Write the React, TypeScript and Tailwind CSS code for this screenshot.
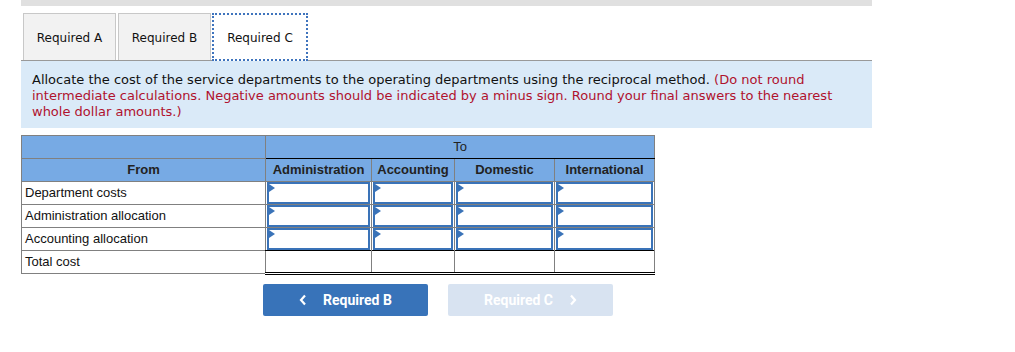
import React from "react";

const Flag = () => (
  <svg className="absolute left-0 top-0" width="6" height="8" viewBox="0 0 6 8">
    <polygon points="0,0 6,4 0,8" fill="#3a73b8" />
  </svg>
);

const InputCell = () => (
  <td className="border border-[#808080] p-0 h-[23px]">
    <div className="relative h-[22px] mx-[1px] border-2 border-[#3a73b8] bg-white">
      <Flag />
    </div>
  </td>
);

export default function App() {
  const rows = ["Department costs", "Administration allocation", "Accounting allocation"];
  return (
    <div className="w-[1015px] h-[352px] bg-white relative" style={{ fontFamily: "'DejaVu Sans', Verdana, sans-serif" }}>
      <div className="ml-[21px] w-[851px] h-[6px] bg-[#e0e0e0]" />
      <div className="ml-[21px] w-[851px] mt-[7px]">
        <div className="flex items-end h-[48px] pl-[2px] gap-[2px] border-b border-[#999999]">
          <div className="w-[93px] h-[47px] pt-[1px] bg-[#f2f2f2] border border-b-0 border-[#c8c8c8] flex items-center justify-center text-[12px] text-[#111]">
            Required A
          </div>
          <div className="w-[93px] h-[47px] pt-[1px] bg-[#f2f2f2] border border-b-0 border-[#c8c8c8] flex items-center justify-center text-[12px] text-[#111]">
            Required B
          </div>
          <div className="-ml-[1px] w-[96px] h-[48px] pt-[1px] -mb-[1px] bg-white border-2 border-dotted border-[#3f74bd] flex items-center justify-center text-[12px] text-[#111]">
            Required C
          </div>
        </div>
        <div className="bg-[#daeaf8] h-[67px] pl-[11px] pr-[30px] pt-[11px] text-[13px] leading-[16px] text-[#111]">
          Allocate the cost of the service departments to the operating departments using the reciprocal method.{" "}
          <span className="text-[#b0122e]">
            (Do not round intermediate calculations. Negative amounts should be indicated by a minus sign. Round your final answers to the nearest whole dollar amounts.)
          </span>
        </div>
      </div>

      <div className="ml-[21px] mt-[7px]" style={{ fontFamily: "'Liberation Sans', Arial, sans-serif" }}>
        <table className="border-collapse table-fixed w-[633px] text-[13px] text-[#111]">
          <colgroup>
            <col className="w-[244px]" />
            <col className="w-[106px]" />
            <col className="w-[83px]" />
            <col className="w-[100px]" />
            <col className="w-[100px]" />
          </colgroup>
          <thead>
            <tr className="h-[23px] bg-[#77aae4]">
              <th className="border border-[#808080] font-normal"></th>
              <th colSpan={4} className="border border-[#808080] border-b-black font-normal text-[#222] text-center">To</th>
            </tr>
            <tr className="h-[23px] bg-[#77aae4]">
              <th className="border border-[#808080] font-bold text-[#222] text-center">From</th>
              <th className="border border-[#808080] border-t-black font-bold text-[#222] text-center whitespace-nowrap">Administration</th>
              <th className="border border-[#808080] border-t-black font-bold text-[#222] text-center">Accounting</th>
              <th className="border border-[#808080] border-t-black font-bold text-[#222] text-center">Domestic</th>
              <th className="border border-[#808080] border-t-black font-bold text-[#222] text-center">International</th>
            </tr>
          </thead>
          <tbody>
            {rows.map((r) => (
              <tr key={r} className="h-[23px]">
                <td className="border border-[#808080] pl-[3px] py-0">{r}</td>
                <InputCell />
                <InputCell />
                <InputCell />
                <InputCell />
              </tr>
            ))}
            <tr className="h-[23px]">
              <td className="border border-[#808080] pl-[3px] py-0">Total cost</td>
              <td className="border border-[#808080] border-t-black border-b-[3px] border-b-black border-double"></td>
              <td className="border border-[#808080] border-t-black border-b-[3px] border-b-black border-double"></td>
              <td className="border border-[#808080] border-t-black border-b-[3px] border-b-black border-double"></td>
              <td className="border border-[#808080] border-t-black border-b-[3px] border-b-black border-double"></td>
            </tr>
          </tbody>
        </table>
      </div>

      <div className="flex gap-[20px] ml-[263px] mt-[9px]" style={{ fontFamily: "Roboto, sans-serif" }}>
        <div className="w-[165px] h-[32px] rounded-[2px] bg-[#3873b9] flex items-center justify-center text-white font-bold text-[14px] gap-[16px]">
          <svg width="8" height="12" viewBox="0 0 8 12"><path d="M6 1.5 L2 6 L6 10.5" stroke="white" strokeWidth="2.2" fill="none" /></svg>
          <span>Required B</span>
        </div>
        <div className="w-[165px] h-[32px] rounded-[2px] bg-[#d8e3f1] flex items-center justify-center text-white font-bold text-[14px] gap-[16px]">
          <span>Required C</span>
          <svg width="8" height="12" viewBox="0 0 8 12"><path d="M2 1.5 L6 6 L2 10.5" stroke="white" strokeWidth="2.2" fill="none" /></svg>
        </div>
      </div>
    </div>
  );
}
